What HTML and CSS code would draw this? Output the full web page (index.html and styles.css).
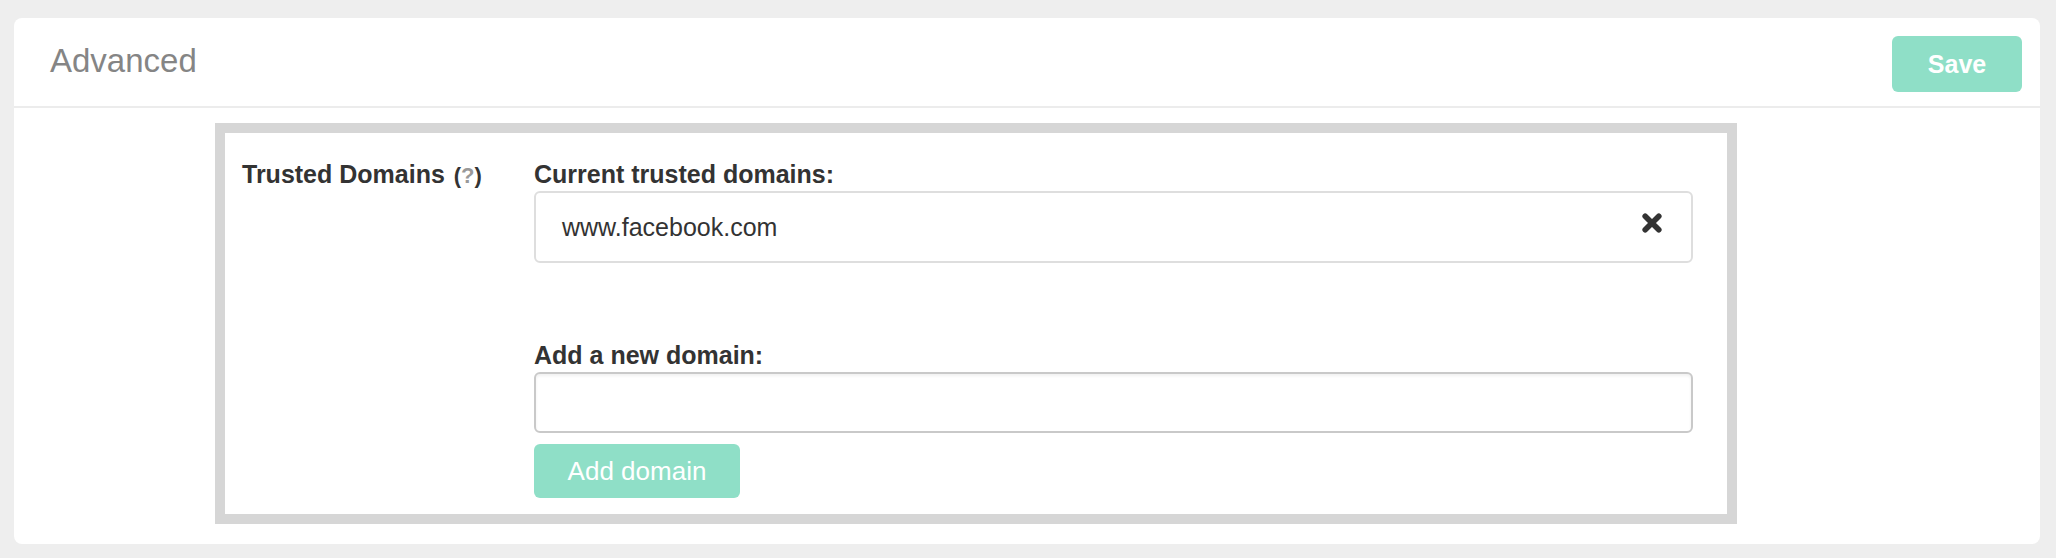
FILE: index.html
```html
<!DOCTYPE html>
<html lang="en">
<head>
<meta charset="utf-8">
<title>Advanced</title>
<link rel="stylesheet" href="styles.css">
</head>
<body>
<div class="card">
  <div class="card-header">
    <h1 class="title">Advanced</h1>
    <button class="btn btn-save" type="button">Save</button>
  </div>
  <div class="card-body">
    <div class="domains-box">
      <div class="field-label">Trusted Domains <span class="help">(<span class="q">?</span>)</span></div>
      <div class="field-content">
        <div class="sub-label">Current trusted domains:</div>
        <div class="domain-item">
          <span class="domain-text">www.facebook.com</span>
          <svg class="remove-icon" width="22" height="20" viewBox="0 0 22 20" aria-hidden="true">
            <path d="M4.2 3.2 L17.8 16.8 M17.8 3.2 L4.2 16.8" stroke="#333" stroke-width="5.6" stroke-linecap="round" fill="none"/>
          </svg>
        </div>
        <div class="sub-label sub-label-add">Add a new domain:</div>
        <input class="domain-input" type="text">
        <button class="btn btn-add" type="button">Add domain</button>
      </div>
    </div>
  </div>
</div>
</body>
</html>
```

FILE: styles.css
```css
html, body {
  margin: 0;
  padding: 0;
}

body {
  background: #eeeeee;
  padding: 18px 16px 0 14px;
  font-family: "Liberation Sans", Arial, Helvetica, sans-serif;
  color: #333;
}

.card {
  background: #ffffff;
  border-radius: 8px;
  height: 526px;
}

.card-header {
  display: flex;
  justify-content: space-between;
  align-items: flex-start;
  height: 70px;
  padding: 18px 18px 0 36px;
  border-bottom: 2px solid #ececec;
}

.title {
  margin: 6px 0 0 0;
  font-size: 33px;
  line-height: 38px;
  font-weight: 400;
  color: #858585;
}

.btn {
  border: none;
  background: #8fdfc7;
  color: #ffffff;
  border-radius: 6px;
  font-family: "Liberation Sans", Arial, Helvetica, sans-serif;
  padding: 0;
  cursor: pointer;
}

.btn-save {
  width: 130px;
  height: 56px;
  font-size: 25px;
  font-weight: 700;
}

.card-body {
  padding: 15px 0 0 201px;
}

.domains-box {
  width: 1522px;
  box-sizing: border-box;
  border: 10px solid #d6d6d6;
  background: #fff;
  display: flex;
  padding: 27px 34px 16px 17px;
}

.field-label {
  width: 292px;
  flex-shrink: 0;
  font-size: 25px;
  line-height: 29px;
  font-weight: 700;
  color: #333;
}

.help {
  font-size: 22px;
  margin-left: 2px;
}

.help .q {
  color: #999;
}

.field-content {
  flex: 1;
  display: flex;
  flex-direction: column;
  align-items: flex-start;
}

.sub-label {
  font-size: 25px;
  line-height: 29px;
  font-weight: 700;
  color: #333;
  margin-bottom: 2px;
}

.domain-item {
  align-self: stretch;
  height: 72px;
  box-sizing: border-box;
  border: 2px solid #dedede;
  border-radius: 6px;
  display: flex;
  align-items: center;
  justify-content: space-between;
  padding: 0 28px 0 26px;
}

.domain-text {
  font-size: 25px;
  color: #333;
}

.remove-icon {
  display: block;
  margin-bottom: 8px;
}

.sub-label-add {
  margin-top: 78px;
}

.domain-input {
  align-self: stretch;
  height: 61px;
  box-sizing: border-box;
  border: 2px solid #c9c9c9;
  border-radius: 6px;
  box-shadow: inset 0 2px 3px rgba(0, 0, 0, 0.06);
  margin: 0;
  padding: 0 26px;
  font-size: 25px;
  font-family: "Liberation Sans", Arial, Helvetica, sans-serif;
  outline: none;
}

.btn-add {
  margin-top: 11px;
  width: 206px;
  height: 54px;
  font-size: 26px;
  font-weight: 400;
}
```
